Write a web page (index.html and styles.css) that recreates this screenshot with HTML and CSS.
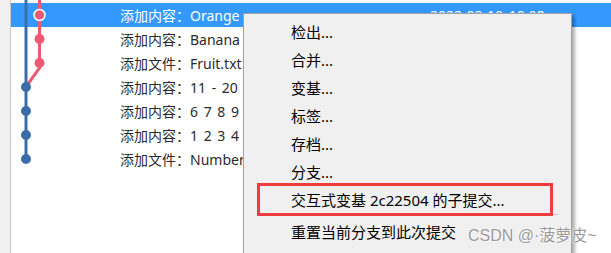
FILE: index.html
```html
<!DOCTYPE html>
<html lang="en">
<head>
    <meta charset="UTF-8">
    <title>Log context menu</title>
    <link rel="stylesheet" href="styles.css">
</head>
<body>
    <div class="app">
        <div class="gutter"></div>

        <div class="log">
            <!-- commit graph drawn over the rows -->
            <svg class="graph" width="60" height="253" viewBox="0 0 60 253">
                <line x1="15" y1="0" x2="15" y2="159" stroke="#3a6ea8" stroke-width="3"/>
                <polyline points="28.5,0 28.5,68 17,84" fill="none" stroke="#ea5a73" stroke-width="3"/>
                <circle cx="28.5" cy="15" r="5.5" fill="#ea5a73" stroke="#fff" stroke-width="1.5"/>
                <circle cx="28.5" cy="39" r="5" fill="#ea5a73"/>
                <circle cx="28.5" cy="63" r="5" fill="#ea5a73"/>
                <circle cx="15" cy="87" r="5" fill="#3a6ea8"/>
                <circle cx="15" cy="111" r="5" fill="#3a6ea8"/>
                <circle cx="15" cy="135" r="5" fill="#3a6ea8"/>
                <circle cx="15" cy="159" r="5" fill="#3a6ea8"/>
            </svg>

            <div class="row selected">
                <span class="msg">添加内容：Orange</span>
                <span class="date">2022-02-10 10:08</span>
            </div>
            <div class="row"><span class="msg">添加内容：Banana</span></div>
            <div class="row"><span class="msg">添加文件：Fruit.txt</span></div>
            <div class="row"><span class="msg">添加内容：11 - 20</span></div>
            <div class="row"><span class="msg">添加内容：6 7 8 9 10</span></div>
            <div class="row"><span class="msg">添加内容：1 2 3 4 5</span></div>
            <div class="row"><span class="msg">添加文件：Numbers.txt</span></div>
        </div>
    </div>

    <!-- context menu -->
    <div class="menu">
        <div class="item">检出...</div>
        <div class="item">合并...</div>
        <div class="item">变基...</div>
        <div class="item">标签...</div>
        <div class="item">存档...</div>
        <div class="item">分支...</div>
        <div class="item">交互式变基 2c22504 的子提交...</div>
        <div class="sep"></div>
        <div class="item">重置当前分支到此次提交</div>
    </div>

    <div class="mark"></div>
    <div class="watermark">CSDN @·菠萝皮~</div>
</body>
</html>
```

FILE: styles.css
```css
* {
    box-sizing: border-box;
    margin: 0;
    padding: 0;
}

body {
    width: 611px;
    height: 253px;
    overflow: hidden;
    background-color: #fff;
    font-family: "Noto Sans", "Noto Sans CJK SC", sans-serif;
    position: relative;
}

.app {
    display: flex;
    height: 253px;
}

.gutter {
    width: 11px;
    background-color: #f0f0f0;
    border-right: 1px solid #c9c9c9;
}

.log {
    flex: 1;
    position: relative;
    padding-top: 3px;
    overflow: hidden;
}

.graph {
    position: absolute;
    left: 0;
    top: 0;
    z-index: 1;
}

.row {
    display: flex;
    align-items: center;
    height: 24px;
    padding-left: 109px;
    font-size: 14px;
    word-spacing: 2px;
    color: #2b2b2b;
}

.row.selected {
    background-color: #3399ff;
    color: #fff;
}

.msg {
    width: 310px;
    white-space: nowrap;
}

.date {
    white-space: nowrap;
}

.menu {
    position: absolute;
    left: 243px;
    top: 13px;
    width: 329px;
    height: 240px;
    padding-top: 4px;
    background-color: #f0f0f0;
    border: 1px solid #a0a0a0;
    border-bottom: none;
    box-shadow: 3px 3px 3px rgba(0,0,0,0.3);
    z-index: 2;
}

.item {
    height: 28px;
    line-height: 28px;
    padding-left: 47px;
    font-size: 15px;
    color: #000;
    white-space: nowrap;
}

.sep {
    height: 1px;
    margin: 0 13px 3px 47px;
    background-color: #c4c4c4;
}

.mark {
    position: absolute;
    left: 257px;
    top: 183px;
    width: 296px;
    height: 33px;
    border: 3px solid #f03c3c;
    z-index: 3;
}

.watermark {
    position: absolute;
    left: 468px;
    top: 222px;
    font-family: "Liberation Sans", "Noto Sans CJK SC", sans-serif;
    font-size: 16px;
    color: #9a9a9a;
    text-shadow: 0 0 2px #fff, 0 0 2px #fff;
    z-index: 3;
}
```
